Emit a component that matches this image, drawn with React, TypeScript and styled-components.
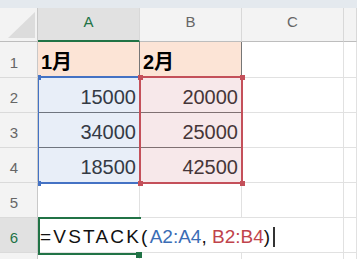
import React from "react";
import styled, { createGlobalStyle } from "styled-components";

const GlobalStyle = createGlobalStyle`
  html, body {
    margin: 0;
    padding: 0;
    background: #fff;
  }
  body {
    font-family: "Liberation Sans", "Noto Sans CJK JP", Arial, sans-serif;
  }
`;

const GREEN = "#217346";
const GRID = "#e1e1e1";
const TABLE = "#767676";
const BLUE = "#4472c4";
const RED = "#c4505a";

const Sheet = styled.div`
  position: relative;
  width: 357px;
  height: 259px;
  overflow: hidden;
  background: #fff;
`;

const Band = styled.div`
  height: 8px;
  background: #e4e9ee;
`;

const Grid = styled.div`
  display: grid;
  grid-template-columns: 38px 102px 102px 102px 1fr;
  grid-template-rows: 34px 36px 35px 35px 35px 35px 35px 1fr;
  height: 251px;
`;

const Corner = styled.div`
  box-sizing: border-box;
  background: #f3f3f3;
  border-right: 1px solid #c8c8c8;
  border-bottom: 1px solid #bdbdbd;
  display: flex;
  align-items: flex-end;
  justify-content: flex-end;
`;

const ColHeader = styled.div<{ $selected?: boolean }>`
  box-sizing: border-box;
  display: flex;
  align-items: center;
  justify-content: center;
  padding-bottom: 6px;
  background: ${(p) => (p.$selected ? "#e1e1e1" : "#f3f3f3")};
  border-right: 1px solid #d8d8d8;
  border-bottom: ${(p) => (p.$selected ? `2px solid ${GREEN}` : "1px solid #bdbdbd")};
  color: ${(p) => (p.$selected ? GREEN : "#666")};
  font-size: 15px;
  line-height: 17px;
`;

const RowHeader = styled.div<{ $selected?: boolean }>`
  box-sizing: border-box;
  display: flex;
  align-items: flex-end;
  justify-content: center;
  padding: 0 9px 6px 0;
  overflow: hidden;
  background: ${(p) => (p.$selected ? "#e1e1e1" : "#f3f3f3")};
  border-right: 1px solid #c8c8c8;
  border-bottom: 1px solid #dadada;
  color: ${(p) => (p.$selected ? GREEN : "#666")};
  font-size: 15px;
  line-height: 17px;
`;

const Cell = styled.div<{
  $fill?: string;
  $edge?: string;
  $right?: boolean;
  $bold?: boolean;
  $span?: number;
}>`
  box-sizing: border-box;
  display: flex;
  align-items: flex-end;
  justify-content: ${(p) => (p.$right ? "flex-end" : "flex-start")};
  padding: 0 3px 5px;
  grid-column: span ${(p) => p.$span ?? 1};
  background: ${(p) => p.$fill ?? "#fff"};
  border-right: 1px solid ${(p) => p.$edge ?? GRID};
  border-bottom: 1px solid ${(p) => p.$edge ?? GRID};
  color: ${(p) => (p.$bold ? "#000" : "#333")};
  font-weight: ${(p) => (p.$bold ? 700 : 400)};
  font-size: 20px;
  line-height: 20px;
  white-space: nowrap;
  overflow: hidden;
`;

const Editor = styled(Cell)`
  padding-left: 2px;
  padding-bottom: 5px;
  font-size: 19px;
  color: #111;
`;

const Formula = styled.span`
  white-space: pre;
`;

const Token = styled.span<{ $color?: string; $spread?: number }>`
  color: ${(p) => p.$color ?? "#111"};
  letter-spacing: ${(p) => p.$spread ?? 0}px;
`;

const Caret = styled.span`
  display: inline-block;
  width: 1.5px;
  height: 20px;
  margin-left: 3px;
  background: #333;
  vertical-align: -4px;
`;

const Layer = styled.div`
  position: absolute;
  left: 38px;
  top: 42px;
  right: 0;
  bottom: 0;
  overflow: hidden;
  pointer-events: none;
`;

const RangeBox = styled.div<{ $color: string; $tint: string; $x: number; $y: number; $w: number; $h: number }>`
  position: absolute;
  box-sizing: border-box;
  left: ${(p) => p.$x}px;
  top: ${(p) => p.$y}px;
  width: ${(p) => p.$w}px;
  height: ${(p) => p.$h}px;
  border: 2px solid ${(p) => p.$color};
  background: ${(p) => p.$tint};
`;

const ActiveBox = styled.div`
  position: absolute;
  box-sizing: border-box;
  left: 0;
  top: 175px;
  width: 103px;
  height: 38px;
  border: 2px solid ${GREEN};
  border-right: none;
`;

const Handle = styled.div<{ $color: string; $x: number; $y: number; $size?: number }>`
  position: absolute;
  left: ${(p) => p.$x}px;
  top: ${(p) => p.$y}px;
  width: ${(p) => p.$size ?? 5}px;
  height: ${(p) => p.$size ?? 5}px;
  background: ${(p) => p.$color};
`;

const data: [string, string][] = [
  ["15000", "20000"],
  ["34000", "25000"],
  ["18500", "42500"],
];

export default function App() {
  return (
    <>
      <GlobalStyle />
      <Sheet>
        <Band />
        <Grid>
          <Corner>
            <svg width="37" height="33" viewBox="0 0 37 33">
              <polygon points="8,30 35,4 35,30" fill="#dcdcdc" />
            </svg>
          </Corner>
          <ColHeader $selected>A</ColHeader>
          <ColHeader>B</ColHeader>
          <ColHeader>C</ColHeader>
          <ColHeader />

          <RowHeader>1</RowHeader>
          <Cell $fill="#fce4d6" $edge={TABLE} $bold>
            1月
          </Cell>
          <Cell $fill="#fce4d6" $edge={TABLE} $bold>
            2月
          </Cell>
          <Cell />
          <Cell />

          {data.map(([a, b], i) => (
            <React.Fragment key={a}>
              <RowHeader>{i + 2}</RowHeader>
              <Cell $right $edge={TABLE}>
                {a}
              </Cell>
              <Cell $right $edge={TABLE}>
                {b}
              </Cell>
              <Cell />
              <Cell />
            </React.Fragment>
          ))}

          <RowHeader>5</RowHeader>
          <Cell />
          <Cell />
          <Cell />
          <Cell />

          <RowHeader $selected>6</RowHeader>
          <Editor $span={3}>
            <Formula>
              <Token $spread={2.2}>=VSTACK(</Token>
              <Token $color="#3b6db5">A2:A4</Token>
              <Token>, </Token>
              <Token $color="#c0434b">B2:B4</Token>
              <Token>)</Token>
              <Caret />
            </Formula>
          </Editor>
          <Cell />

          <RowHeader />
          <Cell />
          <Cell />
          <Cell />
          <Cell />
        </Grid>

        <Layer>
          <RangeBox $color={BLUE} $tint="rgba(68, 114, 196, 0.12)" $x={-1} $y={34} $w={104} $h={108} />
          <Handle $color={BLUE} $x={-2} $y={33} />
          <Handle $color={BLUE} $x={-2} $y={139} />
          <RangeBox $color={RED} $tint="rgba(196, 80, 90, 0.13)" $x={101} $y={34} $w={104} $h={108} />
          <Handle $color={RED} $x={100} $y={33} />
          <Handle $color={RED} $x={202} $y={33} />
          <Handle $color={RED} $x={100} $y={139} />
          <Handle $color={RED} $x={202} $y={139} />
          <ActiveBox />
          <Handle $color={GREEN} $x={98} $y={210} $size={6} />
        </Layer>
      </Sheet>
    </>
  );
}
